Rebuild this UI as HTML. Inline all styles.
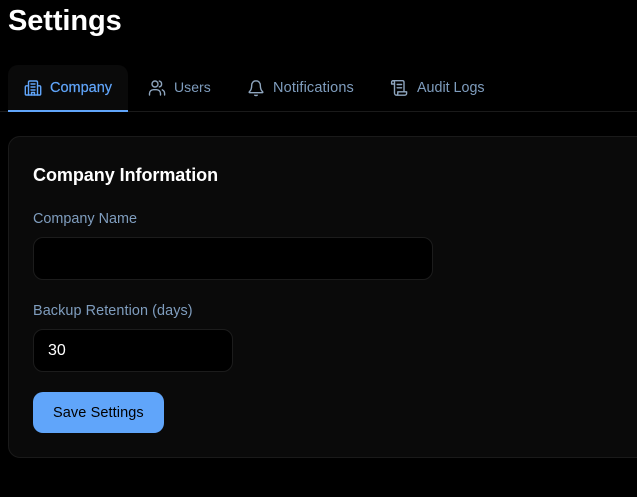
<!DOCTYPE html>
<html lang="en">
<head>
<meta charset="utf-8">
<title>Settings</title>
<style>
html,body{margin:0;padding:0;background:#000;width:637px;height:497px;overflow:hidden;font-family:"Liberation Sans",sans-serif;}
.a{position:absolute;white-space:nowrap;}
.tab{font-size:14.5px;line-height:20px;top:78px;color:#7f9dbe;}
.lbl{font-size:14.4px;line-height:20px;color:#7f9dbe;left:33px;}
.input{background:#000;border:1px solid #1c1c1c;border-radius:10px;box-sizing:border-box;left:33px;}
svg{position:absolute;fill:none;stroke-width:1.4;stroke-linecap:round;stroke-linejoin:round;}
</style>
</head>
<body>
<div class="a" style="left:8px;top:4px;font-size:29px;line-height:34px;font-weight:700;color:#fff;letter-spacing:-.1px;">Settings</div>

<div class="a" style="left:8px;top:65px;width:120px;height:45px;background:#0a0a0a;border-radius:10px 10px 0 0;"></div>
<div class="a" style="left:0;top:111px;width:637px;height:1px;background:#1a1a1a;"></div>
<div class="a" style="left:8px;top:110px;width:120px;height:2px;background:#60a5fa;"></div>

<svg style="left:24px;top:79px;stroke:#60a5fa;" width="18" height="18" viewBox="0 0 18 18">
<path d="M4.5 16V3.4C4.5 2.6 5.1 2 5.9 2h6.2c.8 0 1.4.6 1.4 1.4V16"/>
<path d="M4.5 6.8H2.5c-.7 0-1.2.5-1.2 1.2v7c0 .6.4 1 1 1h13.4c.6 0 1-.4 1-1V8c0-.7-.5-1.2-1.2-1.2h-2"/>
<path d="M7 5h4M7 8h4M7 11h4M7.5 16v-2.5h3V16"/>
</svg>
<div class="a tab" style="left:50px;color:#60a5fa;-webkit-text-stroke:.2px #60a5fa;">Company</div>

<svg style="left:148px;top:79px;stroke:#8fa6bf;" width="18" height="18" viewBox="0 0 18 18">
<circle cx="7" cy="5" r="3"/>
<path d="M1.5 16v-1.5c0-2.2 1.8-3.8 4-3.8h3c2.2 0 4 1.6 4 3.8V16"/>
<path d="M11.3 2.1c1.4.3 2.3 1.5 2.3 2.9s-.9 2.6-2.3 2.9M14.3 10.9c1.4.6 2.3 2 2.3 3.6V16"/>
</svg>
<div class="a tab" style="left:174px;top:77px;font-size:14px;letter-spacing:.05px;">Users</div>

<svg style="left:247px;top:79px;stroke:#8fa6bf;" width="18" height="18" viewBox="0 0 18 18">
<path d="M9 1.8c-2.6 0-4.3 2-4.3 4.5 0 3.3-.8 5.2-2.4 6.6-.3.3-.1.8.3.8h12.8c.4 0 .6-.5.3-.8-1.6-1.4-2.4-3.3-2.4-6.6 0-2.5-1.7-4.5-4.3-4.5z"/>
<path d="M7.8 16.2c.6.3 1.8.3 2.4 0"/>
</svg>
<div class="a tab" style="left:273px;letter-spacing:.15px;">Notifications</div>

<svg style="left:390px;top:79px;stroke:#8fa6bf;" width="18" height="18" viewBox="0 0 18 18">
<path d="M4.5 5H1.6V3.3c0-.9.7-1.6 1.5-1.6h9.4c.9 0 1.5.7 1.5 1.6V12.8"/>
<path d="M3.1 1.7c.8 0 1.4.7 1.4 1.6v10.8c0 1.2 1 2.1 2.1 2.1h8.3c1 0 1.7-.8 1.7-1.7v-1.7H7.8v1.6c0 1-.6 1.8-1.4 1.8"/>
<path d="M7.2 5.5h4.4M7.2 8.8h4.4"/>
</svg>
<div class="a tab" style="left:417px;font-size:14.3px;">Audit Logs</div>

<div class="a" style="left:8px;top:136px;width:700px;height:322px;box-sizing:border-box;background:#0a0a0a;border:1px solid #1a1a1a;border-radius:12px;"></div>

<div class="a" style="left:33px;top:164px;font-size:18px;line-height:22px;font-weight:700;color:#fff;letter-spacing:-.05px;">Company Information</div>

<div class="a lbl" style="top:209px;">Company Name</div>
<div class="a input" style="top:237px;width:400px;height:43px;"></div>

<div class="a lbl" style="top:301px;letter-spacing:.09px;">Backup Retention (days)</div>
<div class="a input" style="top:329px;width:200px;height:43px;"></div>
<div class="a" style="left:48px;top:341px;font-size:16px;line-height:20px;color:#fff;">30</div>

<div class="a" style="left:33px;top:392px;width:131px;height:41px;background:#60a5fa;border-radius:10px;"></div>
<div class="a" style="left:53px;top:403px;font-size:14.5px;line-height:20px;color:#000;letter-spacing:.1px;">Save Settings</div>
</body>
</html>
